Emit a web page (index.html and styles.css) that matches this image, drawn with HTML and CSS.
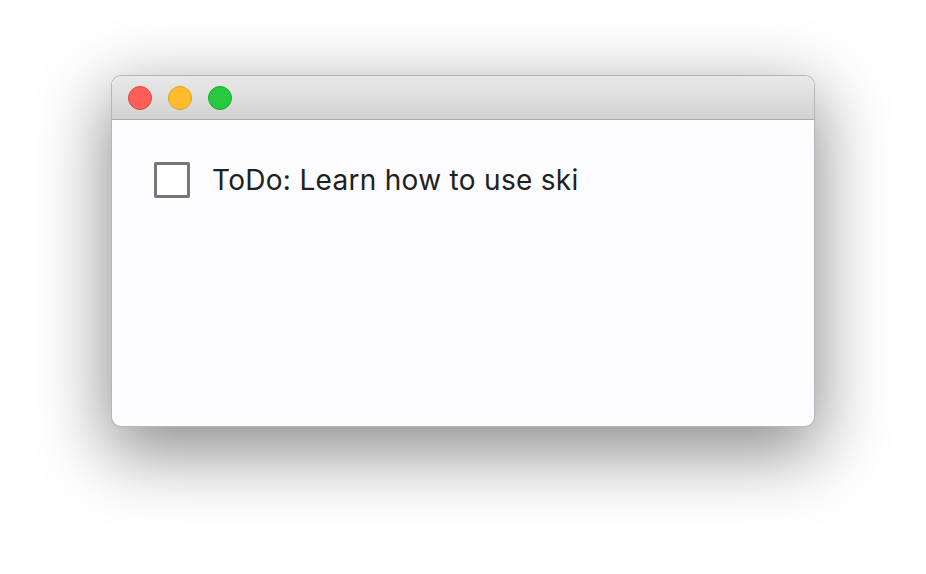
FILE: index.html
```html
<!DOCTYPE html>
<html>
<head>
<meta charset="utf-8">
<link rel="stylesheet" href="styles.css">
</head>
<body>
<div class="stage">
  <div class="window">
    <div class="titlebar">
      <span class="light red"></span>
      <span class="light yellow"></span>
      <span class="light green"></span>
    </div>
    <div class="content">
      <label class="todo">
        <span class="box"></span>
        <span class="label">ToDo: Learn how to use ski</span>
      </label>
    </div>
  </div>
</div>
</body>
</html>
```
FILE: styles.css
```css
html, body {
  margin: 0;
  padding: 0;
  background: #ffffff;
}
.stage {
  width: 926px;
  height: 574px;
  padding: 75px 0 0 111px;
  box-sizing: border-box;
}
.window {
  width: 704px;
  height: 352px;
  box-sizing: border-box;
  border-radius: 10px;
  border: 1px solid rgba(0,0,0,0.28);
  overflow: hidden;
  background: #fdfdff;
  box-shadow: 0 22px 70px 4px rgba(0,0,0,0.45);
  display: flex;
  flex-direction: column;
}
.titlebar {
  height: 44px;
  flex: none;
  box-sizing: border-box;
  background: linear-gradient(#e9e9e9, #d2d2d2);
  border-bottom: 1px solid #acacac;
  display: flex;
  align-items: center;
  padding-left: 16px;
  gap: 16px;
}
.light {
  width: 24px;
  height: 24px;
  border-radius: 50%;
  box-sizing: border-box;
}
.red { background: #fe5f57; border: 1px solid #e2463f; }
.yellow { background: #febc2e; border: 1px solid #e1a116; }
.green { background: #28c840; border: 1px solid #14ae2b; }
.content {
  flex: 1;
  padding: 42px 0 0 42px;
}
.todo {
  display: flex;
  align-items: center;
  gap: 22px;
}
.box {
  width: 36px;
  height: 36px;
  box-sizing: border-box;
  border: 3px solid #767676;
  border-radius: 2px;
  background: #fff;
}
.label {
  font-family: Inter, "Noto Sans", sans-serif;
  font-size: 28px;
  letter-spacing: 0.3px;
  color: #202020;
  line-height: 36px;
}
```
